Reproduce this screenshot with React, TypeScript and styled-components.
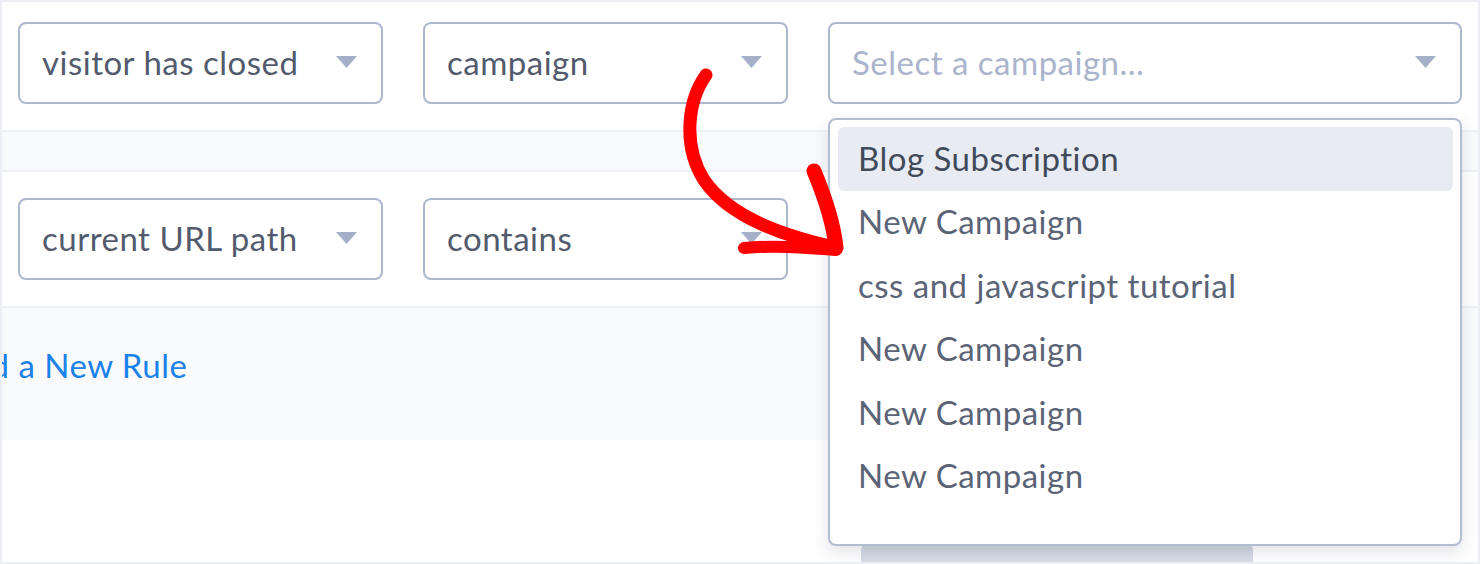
import styled, { createGlobalStyle } from "styled-components";

const GlobalStyle = createGlobalStyle`
  html, body {
    margin: 0;
    padding: 0;
    background: #ffffff;
  }
  body {
    font-family: Lato, "Noto Sans", Arial, sans-serif;
    -webkit-font-smoothing: antialiased;
  }
`;

const campaigns = [
  "Blog Subscription",
  "New Campaign",
  "css and javascript tutorial",
  "New Campaign",
  "New Campaign",
  "New Campaign",
];

const Caret = () => (
  <svg width="21" height="12" viewBox="0 0 21 12">
    <path d="M0 0 H21 L10.5 12 Z" fill="#a5b0c8" />
  </svg>
);

const Select = ({
  value,
  width,
  placeholder,
}: {
  value: string;
  width: number;
  placeholder?: boolean;
}) => (
  <SelectBox $width={width}>
    <SelectText $placeholder={placeholder}>{value}</SelectText>
    <Caret />
  </SelectBox>
);

const Arrow = () => (
  <ArrowSvg width="1480" height="564" viewBox="0 0 1480 564">
    <g fill="none" stroke="#ff0000" strokeLinecap="round" strokeLinejoin="round">
      <path d="M706 75 C688 100 682 145 704 180 C730 218 785 236 834 247" strokeWidth="13" />
      <path d="M814 171 C826 200 834 226 836 248" strokeWidth="15" />
      <path d="M744 248 C776 245 808 248 836 250" strokeWidth="12" />
    </g>
  </ArrowSvg>
);

export default function App() {
  return (
    <>
      <GlobalStyle />
      <Panel>
        <RuleRow $top={20}>
          <Select value="visitor has closed" width={365} />
          <Select value="campaign" width={365} />
          <DropdownWrap>
            <Select value="Select a campaign..." width={634} placeholder />
            <Menu>
              {campaigns.map((name, i) => (
                <MenuItem key={i} $active={i === 0}>
                  {name}
                </MenuItem>
              ))}
            </Menu>
          </DropdownWrap>
        </RuleRow>
        <Divider />
        <RuleRow $top={26}>
          <Select value="current URL path" width={365} />
          <Select value="contains" width={365} />
        </RuleRow>
        <AddRuleBar>
          <AddRuleLink>Add a New Rule</AddRuleLink>
        </AddRuleBar>
        <Footer>
          <FooterButton />
        </Footer>
        <Arrow />
      </Panel>
    </>
  );
}

const Panel = styled.div`
  position: relative;
  width: 1480px;
  height: 564px;
  box-sizing: border-box;
  border: 2px solid #eceef3;
  overflow: hidden;
  background: #ffffff;
`;

const RuleRow = styled.div<{ $top: number }>`
  display: flex;
  gap: 40px;
  padding: ${(p) => p.$top}px 16px 26px 16px;
  height: 82px;
`;

const SelectBox = styled.div<{ $width: number }>`
  width: ${(p) => p.$width}px;
  height: 82px;
  box-sizing: border-box;
  border: 2px solid #adb7cd;
  border-radius: 8px;
  background: #ffffff;
  display: flex;
  align-items: center;
  justify-content: space-between;
  padding: 0 24px 3px 22px;
`;

const SelectText = styled.span<{ $placeholder?: boolean }>`
  font-size: 33px;
  letter-spacing: 0.5px;
  color: ${(p) => (p.$placeholder ? "#aab4cc" : "#525b6d")};
`;

const DropdownWrap = styled.div`
  position: relative;
`;

const Menu = styled.div`
  position: absolute;
  top: 96px;
  left: 0;
  width: 634px;
  height: 428px;
  box-sizing: border-box;
  border: 2px solid #b3bdd1;
  border-radius: 8px;
  background: #ffffff;
  box-shadow: 0 6px 16px rgba(40, 50, 80, 0.14);
  padding: 7px 7px 0 8px;
  display: flex;
  flex-direction: column;
  z-index: 2;
`;

const MenuItem = styled.div<{ $active?: boolean }>`
  height: 63.5px;
  flex-shrink: 0;
  display: flex;
  align-items: center;
  padding: 0 0 2px 20px;
  box-sizing: border-box;
  border-radius: 6px;
  font-size: 33px;
  letter-spacing: 0.5px;
  color: ${(p) => (p.$active ? "#414a5b" : "#5b6476")};
  background: ${(p) => (p.$active ? "#e8ebf2" : "transparent")};
`;

const Divider = styled.div`
  height: 38px;
  background: #f9fafc;
  border-top: 2px solid #eef0f5;
  border-bottom: 2px solid #eef0f5;
`;

const AddRuleBar = styled.div`
  height: 134px;
  background: #f9fafc;
  border-top: 2px solid #eef0f5;
  display: flex;
  align-items: center;
  padding-bottom: 18px;
  box-sizing: border-box;
`;

const AddRuleLink = styled.span`
  font-size: 33px;
  letter-spacing: 0.5px;
  color: #1b82e9;
  margin-left: -53px;
  white-space: nowrap;
`;

const Footer = styled.div`
  display: flex;
  padding: 104px 0 0 859px;
`;

const FooterButton = styled.div`
  width: 392px;
  height: 40px;
  border-radius: 6px;
  background: linear-gradient(#cfd5e0, #e3e6ee);
`;

const ArrowSvg = styled.svg`
  position: absolute;
  left: -2px;
  top: -2px;
  pointer-events: none;
  z-index: 3;
`;
